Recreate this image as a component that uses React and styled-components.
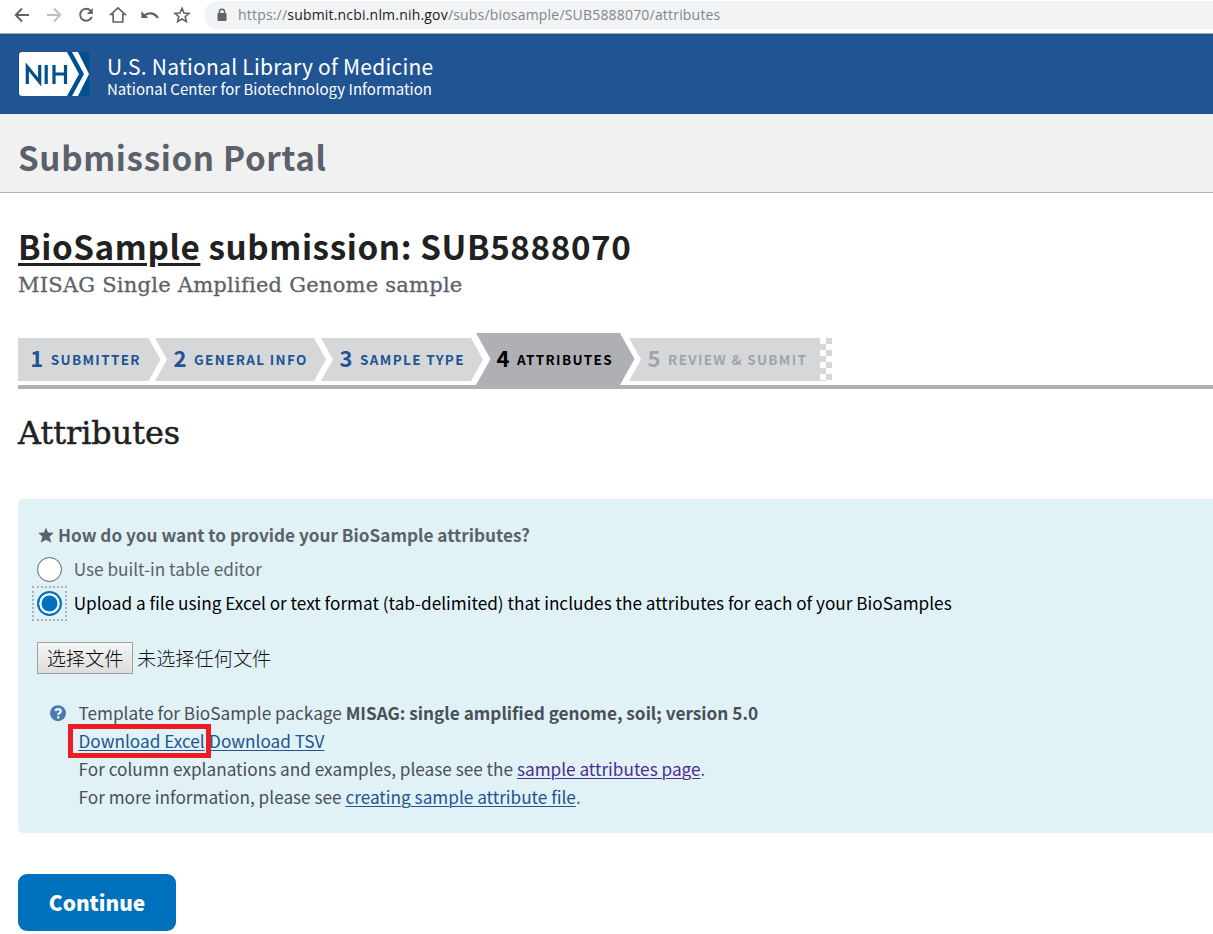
import React from "react";
import styled, { createGlobalStyle } from "styled-components";

const sans = `"Noto Sans CJK SC", "Noto Sans", sans-serif`;
const serif = `"DejaVu Serif", serif`;

const GlobalStyle = createGlobalStyle`
  *, *::before, *::after { box-sizing: border-box; }
  html, body { margin: 0; padding: 0; overflow: hidden; }
  body { background: #fff; color: #212121; font-family: ${sans}; }
`;

const Page = styled.div`
  width: 100%;
  height: 934px;
  overflow: hidden;
  white-space: nowrap;
`;

const BrowserBar = styled.div`
  display: flex;
  height: 33px;
  padding-left: 11px;
  background: #fff;
`;

const NavButton = styled.div`
  display: flex;
  width: 32px;
  height: 31px;
  padding-left: 1px;
  color: ${(p) => (p.$disabled ? "#bdbfc1" : "#5f6368")};
  svg { display: block; }
`;

const AddressBar = styled.div`
  display: flex;
  flex: 1;
  align-items: center;
  height: 28px;
  margin: 1px 0 0 1px;
  padding-left: 12px;
  border-radius: 14px 0 0 14px;
  background: #f1f3f4;
`;

const Url = styled.div`
  margin-left: 10px;
  font: 14px/28px "Open Sans", "Noto Sans", sans-serif;
  letter-spacing: 0.19px;
  color: #80868b;
  b { font-weight: 400; color: #202124; }
`;

const Masthead = styled.header`
  display: flex;
  height: 81px;
  padding: 18px 0 0 18px;
  border-top: 1px solid #a3a8ad;
  background: #205493;
  color: #fff;
`;

const Brand = styled.div`
  margin-left: 18px;
`;

const BrandTitle = styled.div`
  margin-top: 1px;
  font-size: 21px;
  line-height: 26px;
  letter-spacing: 0.23px;
`;

const BrandSub = styled.div`
  margin-top: 2px;
  font-size: 15px;
  line-height: 16px;
  letter-spacing: 0.02px;
`;

const PortalBar = styled.div`
  height: 79px;
  padding: 21px 0 0 18px;
  border-bottom: 1px solid #aeb0b5;
  background: #f1f1f1;
  color: #5b616b;
  font-size: 33.2px;
  font-weight: 700;
  line-height: 44px;
  letter-spacing: 0.65px;
`;

const Main = styled.main`
  padding: 0 0 0 18px;
`;

const Title = styled.h1`
  margin: 31px 0 0;
  font-size: 33.2px;
  font-weight: 700;
  line-height: 44px;
  letter-spacing: 0.61px;
  color: #212121;
`;

const TitleLink = styled.span`
  text-decoration: underline;
  text-decoration-thickness: 3px;
  text-underline-offset: 3px;
`;

const Subtitle = styled.div`
  margin-top: 2px;
  font-family: ${serif};
  font-size: 21px;
  line-height: 30px;
  letter-spacing: 0.24px;
  color: #5b616b;
  -webkit-text-stroke: 0.3px #5b616b;
`;

const Steps = styled.nav`
  display: flex;
  align-items: flex-start;
  height: 56px;
  margin-top: 33px;
  border-bottom: 4px solid #aeb0b5;
`;

const shapes = {
  first: "polygon(0 0, calc(100% - 12px) 0, 100% 50%, calc(100% - 12px) 100%, 0 100%)",
  middle: "polygon(0 0, calc(100% - 12px) 0, 100% 50%, calc(100% - 12px) 100%, 0 100%, 12px 50%)",
  active: "polygon(0 0, calc(100% - 14.5px) 0, 100% 50%, calc(100% - 14.5px) 100%, 0 100%, 14.5px 50%)",
  last: "polygon(0 0, 100% 0, 100% 100%, 0 100%, 12px 50%)",
};

const Step = styled.div`
  flex: none;
  width: ${(p) => p.$width}px;
  height: ${(p) => (p.$kind === "active" ? 52 : 43)}px;
  margin-left: ${(p) => -p.$overlap}px;
  margin-top: ${(p) => (p.$kind === "active" ? 0 : 5)}px;
  padding-left: ${(p) => p.$pad}px;
  padding-top: ${(p) => (p.$kind === "active" ? 5 : 0)}px;
  clip-path: ${(p) => shapes[p.$kind]};
  background: ${(p) => (p.$kind === "active" ? "#aeb0b5" : "#d6d7d9")};
  color: ${(p) => ({ active: "#000", last: "#a0a4aa" })[p.$kind] || "#205493"};
  font-weight: 700;
  line-height: 38px;
`;

const StepNumber = styled.span`
  display: inline-block;
  width: 20.5px;
  font-size: 22px;
`;

const StepLabel = styled.span`
  font-size: 13.5px;
  letter-spacing: 1.33px;
  vertical-align: 2px;
`;

const Checkers = styled.div`
  width: 12px;
  height: 43px;
  margin-top: 5px;
  background: conic-gradient(#d6d7d9 25%, transparent 0 50%, #d6d7d9 0 75%, transparent 0) 0 0 / 12px 12px;
`;

const SectionTitle = styled.h2`
  margin: 22px 0 0;
  font-family: ${serif};
  font-size: 31.8px;
  font-weight: 400;
  line-height: 44px;
  color: #212121;
  -webkit-text-stroke: 0.5px #212121;
`;

const Panel = styled.section`
  height: 334px;
  margin-top: 44px;
  padding: 22px 0 0 19px;
  border-radius: 5px 0 0 5px;
  background: #e1f2f7;
  font-size: 17.19px;
  line-height: 28px;
`;

const Question = styled.div`
  display: flex;
  align-items: center;
  font-weight: 700;
  color: #5b616b;
  svg { margin: 0 4px 0 1px; }
`;

const RadioRow = styled.label`
  display: flex;
  height: 25px;
  margin-top: ${(p) => p.$gap}px;
  line-height: 23px;
  color: ${(p) => (p.$checked ? "#000" : "#5b616b")};
`;

const Radio = styled.span`
  display: block;
  flex: none;
  width: 25px;
  height: 25px;
  margin-right: 11.7px;
  border: ${(p) => (p.$checked ? "2px solid #0071bc" : "1px solid #5b616b")};
  border-radius: 50%;
  background: ${(p) => (p.$checked ? "#0071bc" : "#fff")};
  box-shadow: ${(p) => (p.$checked ? "inset 0 0 0 2.5px #fff" : "none")};
`;

const FocusRing = styled.span`
  flex: none;
  width: 35px;
  height: 35px;
  margin: -5px 6.7px -5px -5px;
  padding: 3px;
  border: 2px dotted #aeb0b5;
`;

const FileRow = styled.div`
  display: flex;
  height: 32px;
  margin-top: 26px;
  font-size: 19.2px;
  font-weight: 300;
  line-height: 32px;
  color: #111;
`;

const FileButton = styled.button`
  width: 96px;
  height: 32px;
  margin: 0 4px 0 0;
  padding: 0;
  border: 1px solid #a0a0a0;
  border-radius: 0;
  background: linear-gradient(#f6f6f6, #dddddd);
  font: 300 19.2px/29px ${sans};
  color: #000;
`;

const Hint = styled.div`
  display: flex;
  margin: 25px 0 0 12.5px;
  color: #494f57;
  svg { flex: none; margin: 6px 12px 0 0; }
`;

const HintLine = styled.div`
  height: 28px;
`;

const Link = styled.a`
  color: ${(p) => (p.$visited ? "#4c2c92" : "#205493")};
  text-decoration: underline;
  text-decoration-thickness: 1px;
  text-underline-offset: 2px;
`;

const Marked = styled.span`
  position: relative;
  margin-right: 4.4px;
  &::after {
    content: "";
    position: absolute;
    left: -11px;
    top: -4px;
    width: 143px;
    height: 34px;
    border: 5px solid #ed1c24;
  }
`;

const ContinueButton = styled.button`
  display: block;
  width: 158px;
  height: 57px;
  margin-top: 41px;
  padding: 0;
  border: 0;
  border-radius: 9px;
  background: #0071bc;
  color: #fff;
  font: 900 20.8px/57px ${sans};
`;

const Stroke = ({ children, ...rest }) => (
  <svg width="20" height="31" viewBox="0 0 20 31" fill="none" stroke="currentColor" strokeWidth="1.9" {...rest}>
    {children}
  </svg>
);

const NihLogo = () => (
  <svg width="71" height="44" viewBox="0 0 71 44">
    <rect width="71" height="44" fill="#00508f" />
    <path d="M4 0H50L62.5 22L50 44H4Q1 44 1 41V3Q1 0 4 0Z" fill="#fff" />
    <path d="M49 0H53.5L65 22L53.5 44H49L61 22Z" fill="#00508f" />
    <path d="M54 0H60L71 22L60 44H54L66 22Z" fill="#fff" />
    <g fill="none" stroke="#00508f" strokeWidth="3.2">
      <path d="M9.3 32V15L21.7 30V13M28.2 13V32M36 13V32M47.5 13V32M36 22H47.5" />
    </g>
  </svg>
);

const steps = [
  { n: 1, label: "SUBMITTER", kind: "first", width: 142.5, overlap: 0, pad: 12.3 },
  { n: 2, label: "GENERAL INFO", kind: "middle", width: 171, overlap: 5.5, pad: 18.6 },
  { n: 3, label: "SAMPLE TYPE", kind: "middle", width: 162, overlap: 5, pad: 18.6 },
  { n: 4, label: "ATTRIBUTES", kind: "active", width: 158.5, overlap: 7, pad: 20.6 },
  { n: 5, label: "REVIEW & SUBMIT", kind: "last", width: 191, overlap: 5.5, pad: 18.6 },
];

export default function App() {
  return (
    <Page>
      <GlobalStyle />
      <BrowserBar>
        <NavButton><Stroke><path d="M17 15H4.5M10 8.5L3.7 15L10 21.5" /></Stroke></NavButton>
        <NavButton $disabled><Stroke><path d="M3 15H15.5M10 8.5L16.3 15L10 21.5" /></Stroke></NavButton>
        <NavButton>
          <Stroke>
            <path d="M14.7 10.8A6 6 0 1 0 15.8 16.8" />
            <path d="M16.8 8V14H10.8Z" fill="currentColor" stroke="none" />
          </Stroke>
        </NavButton>
        <NavButton><Stroke><path d="M5.2 14.5V22H14.8V14.5H17L10 8L3 14.5Z" strokeWidth="1.7" /></Stroke></NavButton>
        <NavButton>
          <Stroke>
            <path d="M4 16C8 12 14.5 12.5 17.8 18" strokeWidth="2.2" />
            <path d="M1.4 11.3V18H8.4Z" fill="currentColor" stroke="none" />
          </Stroke>
        </NavButton>
        <NavButton>
          <Stroke>
            <path d="M10 8.3L12 13L17 13.4L13.2 16.7L14.4 21.6L10 19L5.6 21.6L6.8 16.7L3 13.4L8 13Z" strokeWidth="1.6" />
          </Stroke>
        </NavButton>
        <AddressBar>
          <svg width="12" height="14" viewBox="0 0 12 14" fill="#5f6368">
            <rect x="1.5" y="5" width="9" height="8" rx="1" />
            <path d="M3.5 6V3.8A2.5 2.5 0 0 1 8.5 3.8V6" fill="none" stroke="#5f6368" strokeWidth="1.4" />
          </svg>
          <Url>https://<b>submit.ncbi.nlm.nih.gov</b>/subs/biosample/SUB5888070/attributes</Url>
        </AddressBar>
      </BrowserBar>

      <Masthead>
        <NihLogo />
        <Brand>
          <BrandTitle>U.S. National Library of Medicine</BrandTitle>
          <BrandSub>National Center for Biotechnology Information</BrandSub>
        </Brand>
      </Masthead>

      <PortalBar>Submission Portal</PortalBar>

      <Main>
        <Title><TitleLink>BioSample</TitleLink> submission: SUB5888070</Title>
        <Subtitle>MISAG Single Amplified Genome sample</Subtitle>

        <Steps>
          {steps.map((s) => (
            <Step key={s.n} $kind={s.kind} $width={s.width} $overlap={s.overlap} $pad={s.pad}>
              <StepNumber>{s.n}</StepNumber>
              <StepLabel>{s.label}</StepLabel>
            </Step>
          ))}
          <Checkers />
        </Steps>

        <SectionTitle>Attributes</SectionTitle>

        <Panel>
          <Question>
            <svg width="16" height="15" viewBox="0 0 16 15" fill="currentColor">
              <path d="M8 0.3L9.9 4.8L15.3 5L11.3 8.8L13 14.2L8 11.5L3 14.2L4.7 8.8L0.7 5L6.1 4.8Z" stroke="currentColor" strokeWidth="0.5" />
            </svg>
            How do you want to provide your BioSample attributes?
          </Question>
          <RadioRow $gap={8}>
            <Radio />
            Use built-in table editor
          </RadioRow>
          <RadioRow $gap={9} $checked>
            <FocusRing><Radio $checked /></FocusRing>
            Upload a file using Excel or text format (tab-delimited) that includes the attributes for each of your BioSamples
          </RadioRow>
          <FileRow>
            <FileButton>选择文件</FileButton>
            未选择任何文件
          </FileRow>
          <Hint>
            <svg width="17" height="17" viewBox="0 0 17 17">
              <circle cx="8" cy="8.2" r="8" fill="#4c78ab" />
              <path d="M5.5 6.2C5.7 3.5 10.8 3.5 10.8 6.3C10.8 8 8.2 8 8.2 10" fill="none" stroke="#e1f3f8" strokeWidth="2.3" />
              <rect x="7" y="11.2" width="2.4" height="2.3" fill="#e1f3f8" />
            </svg>
            <div>
              <HintLine>Template for BioSample package <b>MISAG: single amplified genome, soil; version 5.0</b></HintLine>
              <HintLine><Marked><Link>Download Excel</Link></Marked><Link>Download TSV</Link></HintLine>
              <HintLine>For column explanations and examples, please see the <Link $visited>sample attributes page</Link>.</HintLine>
              <HintLine>For more information, please see <Link>creating sample attribute file</Link>.</HintLine>
            </div>
          </Hint>
        </Panel>

        <ContinueButton>Continue</ContinueButton>
      </Main>
    </Page>
  );
}
